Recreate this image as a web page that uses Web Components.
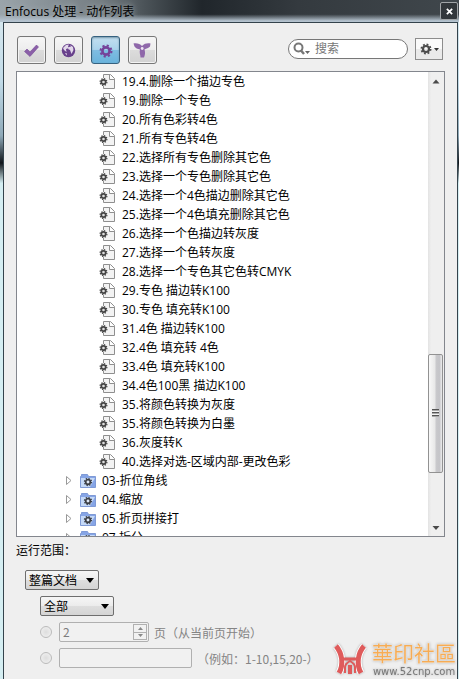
<!DOCTYPE html>
<html lang="zh-CN">
<head>
<meta charset="utf-8">
<title>Enfocus 处理 - 动作列表</title>
<style>
  body {
    margin: 0;
    font-family: "Open Sans", "Noto Sans CJK SC", sans-serif;
    font-size: 12px;
    line-height: 19px;
    color: #000;
    text-spacing-trim: space-all;
  }
</style>
</head>
<body>

<action-window>
  <span slot="title">Enfocus 处理 - 动作列表</span>

  <tool-bar slot="toolbar">
    <tool-button label="动作">
      <svg viewBox="0 0 27 26"><path d="M6.500 14.500l2.500-2.500 3 3 6.500-7 2 2-8.500 9.500z" fill="#8a5fa8" stroke="#754894" stroke-width=".6"/></svg>
    </tool-button>
    <tool-button label="全局更改">
      <svg viewBox="0 0 27 26"><circle cx="13.500" cy="13.500" r="6.700" fill="#68418c"/><path d="M8 11l3-3 3-.5-1 2 1 1.500-3 1 .5 3-2.500-2zM15 8l3 2 .500 3-2 4-1.500-4-2-1 1-2 2-.500zM10 16l2 .5-.5 2z" fill="#e2d8ea"/></svg>
    </tool-button>
    <tool-button label="动作列表" pressed>
      <svg viewBox="0 0 27 26"><circle cx="14" cy="14" r="3.600" fill="none" stroke="#75439a" stroke-width="2.600"/><circle cx="14" cy="14" r="5.500" fill="none" stroke="#75439a" stroke-width="2" stroke-dasharray="2.160"/></svg>
    </tool-button>
    <tool-button label="预检配置">
      <svg viewBox="0 0 27 26"><path d="M4.500 6.500c4-.5 6.500.5 8.500 2.500 2.500-2.500 5-3 8.500-2.500l-.5 3c-1.500 1.500-3.500 2-5.500 3 1 3 .5 5.500-.5 8h-3.500c0-2.500-1.500-5-.500-8-2.500-.5-4.500-1.500-5.500-3z" fill="#8f68aa"/><circle cx="13.200" cy="11.500" r="1.400" fill="#eee5f3"/></svg>
    </tool-button>
    <search-box slot="end"></search-box>
    <menu-button slot="end"></menu-button>
  </tool-bar>

  <action-tree slot="list">
    <tree-row>19.4.删除一个描边专色</tree-row>
    <tree-row>19.删除一个专色</tree-row>
    <tree-row>20.所有色彩转4色</tree-row>
    <tree-row>21.所有专色转4色</tree-row>
    <tree-row>22.选择所有专色删除其它色</tree-row>
    <tree-row>23.选择一个专色删除其它色</tree-row>
    <tree-row>24.选择一个4色描边删除其它色</tree-row>
    <tree-row>25.选择一个4色填充删除其它色</tree-row>
    <tree-row>26.选择一个色描边转灰度</tree-row>
    <tree-row>27.选择一个色转灰度</tree-row>
    <tree-row>28.选择一个专色其它色转CMYK</tree-row>
    <tree-row>29.专色 描边转K100</tree-row>
    <tree-row>30.专色 填充转K100</tree-row>
    <tree-row>31.4色 描边转K100</tree-row>
    <tree-row>32.4色 填充转 4色</tree-row>
    <tree-row>33.4色 填充转K100</tree-row>
    <tree-row>34.4色100黑 描边K100</tree-row>
    <tree-row>35.将颜色转换为灰度</tree-row>
    <tree-row>35.将颜色转换为白墨</tree-row>
    <tree-row>36.灰度转K</tree-row>
    <tree-row>40.选择对选-区域内部-更改色彩</tree-row>
    <tree-row folder>03-折位角线</tree-row>
    <tree-row folder>04.缩放</tree-row>
    <tree-row folder>05.折页拼接打</tree-row>
    <tree-row folder>07.拆分</tree-row>
  </action-tree>

  <run-range slot="range"></run-range>
  <site-mark slot="mark"></site-mark>
</action-window>

<template id="action-window">
  <style>
    :host {
      display: flex;
      flex-direction: column;
      position: relative;
      height: 100vh;
      box-sizing: border-box;
      padding: 0 1px 0 3px;
      background: linear-gradient(180deg, #dcebf0, #c2dbe8 12%, #8fa9b8 20%, #10151a 24%, #d5eef2 27%, #d5eef2);
    }
    header {
      display: flex;
      align-items: center;
      justify-content: space-between;
      height: 22px;
      margin: 0 -1px 0 -3px;
      padding: 0 1px 0 5px;
      background:
        linear-gradient(180deg, transparent 65%, #b5c3cf 95%),
        linear-gradient(90deg, #9aa4aa, #747d82 22%, #4d555a 31%, #20262b 44%, #343a3f 65%, #40474c);
    }
    h1 {
      margin: 0;
      font-size: 12px;
      font-weight: 400;
      line-height: 19px;
      text-shadow: 0 0 6px #b5bfc4;
    }
    header button {
      display: grid;
      place-items: center;
      width: 18px;
      height: 18px;
      padding: 0;
      border: 1px solid #a1a5a8;
      border-radius: 2px;
      background: #32373b;
    }
    header svg { width: 7px; height: 7px; }
    main {
      flex: 1;
      min-height: 0;
      display: flex;
      flex-direction: column;
      padding: 0 12px;
      border: 1px solid #34434c;
      border-bottom: 0;
      background: #efefef;
    }
    slot[name="list"] { display: flex; flex: 1; min-height: 0; }
  </style>
  <header>
    <h1><slot name="title"></slot></h1>
    <button type="button" aria-label="关闭">
      <svg viewBox="0 0 8 8"><path d="M1 1l6 6M7 1l-6 6" stroke="#fff" stroke-width="2"/></svg>
    </button>
  </header>
  <main>
    <slot name="toolbar"></slot>
    <slot name="list"></slot>
    <slot name="range"></slot>
  </main>
  <slot name="mark"></slot>
</template>

<template id="tool-bar">
  <style>
    :host {
      display: flex;
      justify-content: space-between;
      align-items: center;
      height: 48px;
      padding: 0 2px 0 1px;
    }
    div { display: flex; align-items: center; gap: 8px; margin-top: 6px; }
    .end { gap: 7px; margin-top: 4px; }
  </style>
  <div><slot></slot></div>
  <div class="end"><slot name="end"></slot></div>
</template>

<template id="tool-button">
  <style>
    :host { display: block; }
    button {
      display: block;
      width: 29px;
      height: 28px;
      padding: 0;
      border: 1px solid #777;
      border-radius: 3px;
      background: linear-gradient(180deg, #f6f6f6, #ededed 48%, #dcdcdc 50%, #d2d2d2);
      box-shadow: inset 0 0 0 1px #f3f3f3;
    }
    :host([pressed]) button {
      border-color: #35617f;
      background: linear-gradient(180deg, #c3dff0, #a9d3ec 48%, #7fbde2 50%, #69b3dc);
      box-shadow: inset 0 1px 2px #7899ac;
    }
    ::slotted(svg) { display: block; width: 27px; height: 26px; }
  </style>
  <button type="button"><slot></slot></button>
</template>

<template id="search-box">
  <style>
    :host {
      display: flex;
      align-items: center;
      gap: 4px;
      box-sizing: border-box;
      width: 120px;
      height: 20px;
      padding: 0 6px 0 4px;
      border: 1px solid #777;
      border-radius: 10px;
      background: #fff;
    }
    svg { flex: none; width: 18px; height: 16px; }
    input {
      flex: 1;
      min-width: 0;
      padding: 0;
      border: 0;
      outline: 0;
      background: none;
      font: inherit;
      line-height: 18px;
    }
    input::placeholder { color: #777; opacity: 1; }
  </style>
  <svg viewBox="0 0 18 16"><circle cx="5.500" cy="6.500" r="4" fill="none" stroke="#777" stroke-width="2"/><path d="M8 9.500l3 3.500" stroke="#777" stroke-width="2.500"/><path d="M12 10h5l-2.500 3z" fill="#666"/></svg>
  <input type="text" placeholder="搜索" aria-label="搜索">
</template>

<template id="menu-button">
  <style>
    :host { display: block; }
    button {
      display: block;
      width: 28px;
      height: 22px;
      padding: 0;
      border: 1px solid #8d8d8d;
      background: linear-gradient(180deg, #fafafa 48%, #eaeaea 50%);
    }
    svg { display: block; width: 26px; height: 20px; }
  </style>
  <button type="button" aria-label="选项">
    <svg viewBox="0 0 26 20"><g fill="none" stroke="#4c4c4c"><circle cx="10" cy="10" r="3" stroke-width="2.200"/><circle cx="10" cy="10" r="4.600" stroke-width="1.800" stroke-dasharray="1.806"/></g><path d="M18 9h5l-2.500 3z" fill="#333"/></svg>
  </button>
</template>

<template id="action-tree">
  <style>
    :host {
      display: flex;
      flex: 1;
      min-width: 0;
      border: 1px solid #83868d;
      background: #fff;
    }
    .rows { flex: 1; min-width: 0; overflow: hidden; }
  </style>
  <div class="rows" role="tree"><slot></slot></div>
  <scroll-bar></scroll-bar>
</template>

<template id="tree-row">
  <style>
    :host {
      display: flex;
      align-items: center;
      height: 19px;
      padding-left: 82px;
      white-space: nowrap;
    }
    :host([folder]) { padding-left: 48px; }
    svg { flex: none; display: none; }
    .doc { display: block; width: 18px; height: 17px; margin-right: 5px; }
    :host([folder]) .doc { display: none; }
    :host([folder]) .arrow { display: block; width: 8px; height: 9px; margin-right: 7px; }
    :host([folder]) .dir { display: block; width: 16px; height: 16px; margin-right: 6px; }
  </style>
  <svg class="arrow" viewBox="0 0 8 9"><path d="M1.500.5v8l4.500-4z" fill="#fff" stroke="#999"/></svg>
  <svg class="dir" viewBox="0 0 16 16">
    <path d="M.5 14.500V3.500h1v-2h6l1 2h7v11z" fill="#86a5e6" stroke="#7f9ad6"/>
    <path d="M1 14V5h14l-5 9z" fill="#c5d9f7"/>
    <circle cx="8" cy="9" r="2.300" fill="#dfe7f5" stroke="#3c3f45" stroke-width="1.700"/>
    <circle cx="8" cy="9" r="3.500" fill="none" stroke="#3c3f45" stroke-width="1.300" stroke-dasharray="1.374"/>
  </svg>
  <svg class="doc" viewBox="0 0 18 17">
    <path d="M4.500 1.500h7l4 4v10h-11z" fill="#f3f3f3" stroke="#8f8f8f"/>
    <path d="M10.500 1.500v5h5" fill="#fff" stroke="#8f8f8f"/>
    <circle cx="4.500" cy="9" r="4" fill="#f7f7f7"/>
    <circle cx="4.500" cy="9" r="2.200" fill="#ddd" stroke="#444" stroke-width="1.700"/>
    <circle cx="4.500" cy="9" r="3.400" fill="none" stroke="#444" stroke-width="1.200" stroke-dasharray="1.335"/>
  </svg>
  <span><slot></slot></span>
</template>

<template id="scroll-bar">
  <style>
    :host {
      display: flex;
      flex-direction: column;
      width: 16px;
      background: linear-gradient(90deg, #e3e3e3, #efefef 20%);
    }
    svg { flex: none; width: 16px; height: 18px; }
    .before { flex: 265; }
    .after { flex: 45; }
    .thumb {
      flex: 118;
      display: grid;
      place-items: center;
      box-sizing: border-box;
      margin-right: 1px;
      border: 1px solid #929292;
      border-radius: 2px;
      background: linear-gradient(90deg, #f8f8f8, #e8e8e8 45%, #c9c9cc 55%, #c4c4c8 80%, #eee);
    }
    .grip {
      width: 7px;
      height: 8px;
      background: repeating-linear-gradient(180deg, #555 0 1px, #aaa 1px 2px, #f2f2f2 2px 3px);
    }
  </style>
  <svg viewBox="0 0 16 18"><path d="M4.500 11.500h7l-3.500-4z" fill="#4a4a4a"/></svg>
  <div class="before"></div>
  <div class="thumb"><div class="grip"></div></div>
  <div class="after"></div>
  <svg viewBox="0 0 16 18"><path d="M4.500 8h7l-3.500 4z" fill="#4a4a4a"/></svg>
</template>

<template id="run-range">
  <style>
    :host {
      display: flex;
      flex-direction: column;
      gap: 6px;
      padding: 3px 0 11px;
      font-family: "Noto Sans CJK SC", sans-serif;
    }
    h2 { margin: 0 0 5px; font-size: 12px; font-weight: 400; line-height: 19px; }
    .whole { margin-left: 9px; }
    .all, .line { margin-left: 24px; }
    .line { display: flex; align-items: center; height: 20px; color: #848484; }
    .line label { white-space: nowrap; }
    input[type="radio"] {
      appearance: none;
      flex: none;
      width: 12px;
      height: 12px;
      margin: 0 7px 0 0;
      border: 1px solid #bbb;
      border-radius: 50%;
      background: radial-gradient(#ddd, #f3f3f3);
    }
    .field {
      box-sizing: border-box;
      height: 20px;
      margin: 0;
      padding: 0 3px;
      border: 1px solid #b0b0b0;
      border-radius: 2px;
      background: #f1f1f1;
      color: #7d7d7d;
      font: inherit;
      line-height: 18px;
    }
    .count {
      display: flex;
      align-items: center;
      width: 90px;
      padding-right: 1px;
      margin-right: 5px;
    }
    .count input {
      appearance: textfield;
      flex: 1;
      min-width: 0;
      padding: 0;
      border: 0;
      background: none;
      color: inherit;
      font: inherit;
    }
    .count input::-webkit-inner-spin-button { appearance: none; margin: 0; }
    .steps { display: flex; flex-direction: column; width: 14px; height: 16px; border: 1px solid #b0b0b0; box-sizing: border-box; }
    .steps button { flex: 1; display: grid; place-items: center; min-height: 0; padding: 0; border: 0; background: none; }
    .steps button + button { border-top: 1px solid #b0b0b0; }
    .steps svg { width: 5px; height: 3px; }
    .pages { width: 133px; margin-right: 5px; }
  </style>
  <h2>运行范围：</h2>
  <combo-box class="whole" label="范围">整篇文档</combo-box>
  <combo-box class="all" label="页面">全部</combo-box>
  <div class="line">
    <input type="radio" name="pages" aria-label="页数" disabled>
    <span class="field count">
      <input id="count" type="number" value="2" disabled>
      <span class="steps">
        <button type="button" aria-label="增加" disabled><svg viewBox="0 0 5 3"><path d="M0 3h5L2.500 0z" fill="#888"/></svg></button>
        <button type="button" aria-label="减少" disabled><svg viewBox="0 0 5 3"><path d="M0 0h5L2.500 3z" fill="#888"/></svg></button>
      </span>
    </span>
    <label for="count">页（从当前页开始）</label>
  </div>
  <div class="line">
    <input type="radio" name="pages" aria-label="页面范围" disabled>
    <input class="field pages" id="pages" type="text" disabled>
    <label for="pages">（例如：1-10,15,20-）</label>
  </div>
</template>

<template id="combo-box">
  <style>
    :host { display: block; width: 74px; }
    select {
      display: block;
      appearance: none;
      box-sizing: border-box;
      width: 100%;
      height: 20px;
      padding: 0 18px 0 3px;
      border: 1px solid #6e6e6e;
      border-radius: 2px;
      color: #000;
      font: inherit;
      line-height: 18px;
      background: linear-gradient(180deg, #f6f6f6, #ececec 48%, #dedede 50%, #d4d4d4);
    }
    .box { display: grid; align-items: center; }
    select, svg { grid-area: 1 / 1; }
    svg { justify-self: end; width: 8px; height: 5px; margin-right: 5px; pointer-events: none; }
  </style>
  <div class="box">
    <select><option></option></select>
    <svg viewBox="0 0 8 5"><path d="M0 0h8L4 5z"/></svg>
  </div>
</template>

<template id="site-mark">
  <style>
    :host {
      position: absolute;
      right: 3px;
      bottom: 1px;
      display: flex;
      align-items: center;
      gap: 5px;
      filter: drop-shadow(0 0 1px #aaa);
    }
    svg { width: 34px; height: 32px; }
    .name {
      font-family: "Liberation Sans", "Noto Sans CJK TC", sans-serif;
      font-size: 21px;
      line-height: 24px;
      color: #f6ac55;
      text-shadow: 0 0 2px #fff, 0 0 1px #fff;
    }
    .url {
      font-family: "DejaVu Sans", sans-serif;
      font-size: 10px;
      line-height: 12px;
      text-align: center;
      color: #777;
    }
  </style>
  <svg viewBox="0 0 34 32">
    <g fill="none">
      <path d="M3 2c6 7 8 18 3 27M31 2c-6 7-8 18-3 27" stroke="#fff" stroke-width="7"/>
      <g stroke="#df5b5b">
        <path d="M3 2c6 7 8 18 3 27M31 2c-6 7-8 18-3 27" stroke-width="5"/>
        <path d="M8 15h18" stroke-width="3"/>
        <path d="M12 29v-6c0-3 5-6 5-6s5 3 5 6v6" stroke-width="2"/>
        <path d="M17 21v9" stroke-width="4"/>
      </g>
    </g>
  </svg>
  <div>
    <div class="name">華印社區</div>
    <div class="url">www.52cnp.com</div>
  </div>
</template>

<script>
class BaseElement extends HTMLElement {
  constructor() {
    super();
    this.attachShadow({ mode: 'open' });
    const template = document.getElementById(this.localName);
    this.shadowRoot.appendChild(template.content.cloneNode(true));
  }
}

class ToolButton extends BaseElement {
  connectedCallback() {
    const button = this.shadowRoot.querySelector('button');
    button.setAttribute('aria-label', this.getAttribute('label'));
    button.setAttribute('aria-pressed', this.hasAttribute('pressed'));
  }
}

class TreeRow extends BaseElement {
  connectedCallback() {
    this.setAttribute('role', 'treeitem');
  }
}

class ComboBox extends BaseElement {
  connectedCallback() {
    const select = this.shadowRoot.querySelector('select');
    select.setAttribute('aria-label', this.getAttribute('label'));
    select.options[0].textContent = this.textContent.trim();
  }
}

class RunRange extends BaseElement {
  connectedCallback() {
    const count = this.shadowRoot.querySelector('#count');
    const [up, down] = this.shadowRoot.querySelectorAll('.steps button');
    up.addEventListener('click', () => count.stepUp());
    down.addEventListener('click', () => count.stepDown());
  }
}

customElements.define('scroll-bar', class extends BaseElement {});
customElements.define('combo-box', ComboBox);
customElements.define('tree-row', TreeRow);
customElements.define('action-tree', class extends BaseElement {});
customElements.define('tool-button', ToolButton);
customElements.define('search-box', class extends BaseElement {});
customElements.define('menu-button', class extends BaseElement {});
customElements.define('tool-bar', class extends BaseElement {});
customElements.define('run-range', RunRange);
customElements.define('site-mark', class extends BaseElement {});
customElements.define('action-window', class extends BaseElement {});
</script>
</body>
</html>
